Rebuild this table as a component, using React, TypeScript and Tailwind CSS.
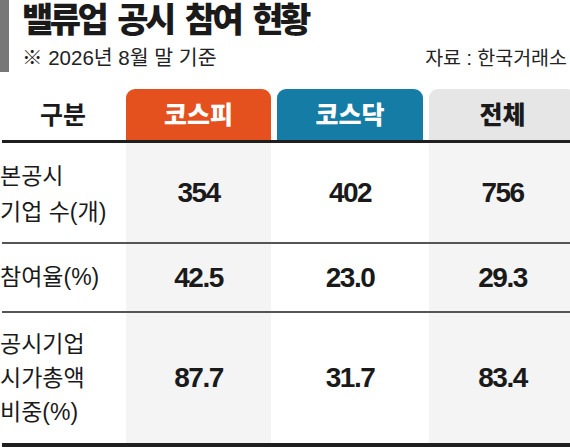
import React from "react";

const ko = { fontFamily: '"Liberation Sans", "Noto Sans CJK KR", sans-serif' };

export default function App() {
  return (
    <div className="w-[570px] h-[447px] bg-white overflow-hidden text-[#1a1a1a]" style={ko}>
      {/* Title block */}
      <div className="flex h-[89px]">
        <div className="w-[9px] h-[72px] bg-[#777777]" />
        <div className="flex-1 pl-[13px]">
          <div className="text-[34px] leading-[36px] font-black tracking-[-3.5px] text-[#1a1a1a] mt-[2px] [word-spacing:6px]">
            밸류업 공시 참여 현황
          </div>
          <div className="flex justify-between items-end mt-[8px]">
            <div className="text-[20.5px] leading-[24px] text-[#222]">※ 2026년 8월 말 기준</div>
            <div className="text-[19.5px] leading-[24px] text-[#222] pr-[3px]">자료 : 한국거래소</div>
          </div>
        </div>
      </div>

      {/* Header row */}
      <div className="grid grid-cols-[120px_145px_146px_147px] gap-x-[6px] h-[51px] items-stretch">
        <div className="flex items-center justify-center text-[25px] font-semibold text-[#1a1a1a] pl-[6px] pt-[2px]">구분</div>
        <div className="flex items-center justify-center rounded-t-[9px] bg-[#e4501e] text-white text-[25px] font-black pt-[2px]">코스피</div>
        <div className="flex items-center justify-center rounded-t-[9px] bg-[#157ca5] text-white text-[25px] font-black pt-[2px]">코스닥</div>
        <div className="flex items-center justify-center rounded-t-[9px] bg-[#e6e6e6] text-[#1a1a1a] text-[25px] font-black pt-[2px]">전체</div>
      </div>
      <div className="h-[3px] bg-[#1f1f1f] ml-[2px]" />

      {/* Row 1 */}
      <div className="grid grid-cols-[120px_145px_146px_147px] gap-x-[6px] h-[99px]">
        <div className="flex flex-col justify-center text-[23px] leading-[36px] text-[#1a1a1a] pt-[2px]">
          <span>본공시</span>
          <span>기업 수(개)</span>
        </div>
        <div className="flex items-center justify-center bg-[#f4f4f4] text-[28px] font-bold tracking-[-1.5px]">354</div>
        <div className="flex items-center justify-center text-[28px] font-bold tracking-[-1.5px]">402</div>
        <div className="flex items-center justify-center bg-[#f4f4f4] text-[28px] font-bold tracking-[-1.5px]">756</div>
      </div>
      <div className="h-[2px] bg-[#555] ml-[2px]" />

      {/* Row 2 */}
      <div className="grid grid-cols-[120px_145px_146px_147px] gap-x-[6px] h-[67px]">
        <div className="flex items-center text-[23px] text-[#1a1a1a]">참여율(%)</div>
        <div className="flex items-center justify-center bg-[#f4f4f4] text-[28px] font-bold tracking-[-1.5px]">42.5</div>
        <div className="flex items-center justify-center text-[28px] font-bold tracking-[-1.5px]">23.0</div>
        <div className="flex items-center justify-center bg-[#f4f4f4] text-[28px] font-bold tracking-[-1.5px]">29.3</div>
      </div>
      <div className="h-[2px] bg-[#555] ml-[2px]" />

      {/* Row 3 */}
      <div className="grid grid-cols-[120px_145px_146px_147px] gap-x-[6px] h-[130px]">
        <div className="flex flex-col justify-center text-[23px] leading-[34px] text-[#1a1a1a]">
          <span>공시기업</span>
          <span>시가총액</span>
          <span>비중(%)</span>
        </div>
        <div className="flex items-center justify-center bg-[#f4f4f4] text-[28px] font-bold tracking-[-1.5px]">87.7</div>
        <div className="flex items-center justify-center text-[28px] font-bold tracking-[-1.5px]">31.7</div>
        <div className="flex items-center justify-center bg-[#f4f4f4] text-[28px] font-bold tracking-[-1.5px]">83.4</div>
      </div>
      <div className="h-[4px] bg-[#1f1f1f] ml-[2px]" />
    </div>
  );
}
